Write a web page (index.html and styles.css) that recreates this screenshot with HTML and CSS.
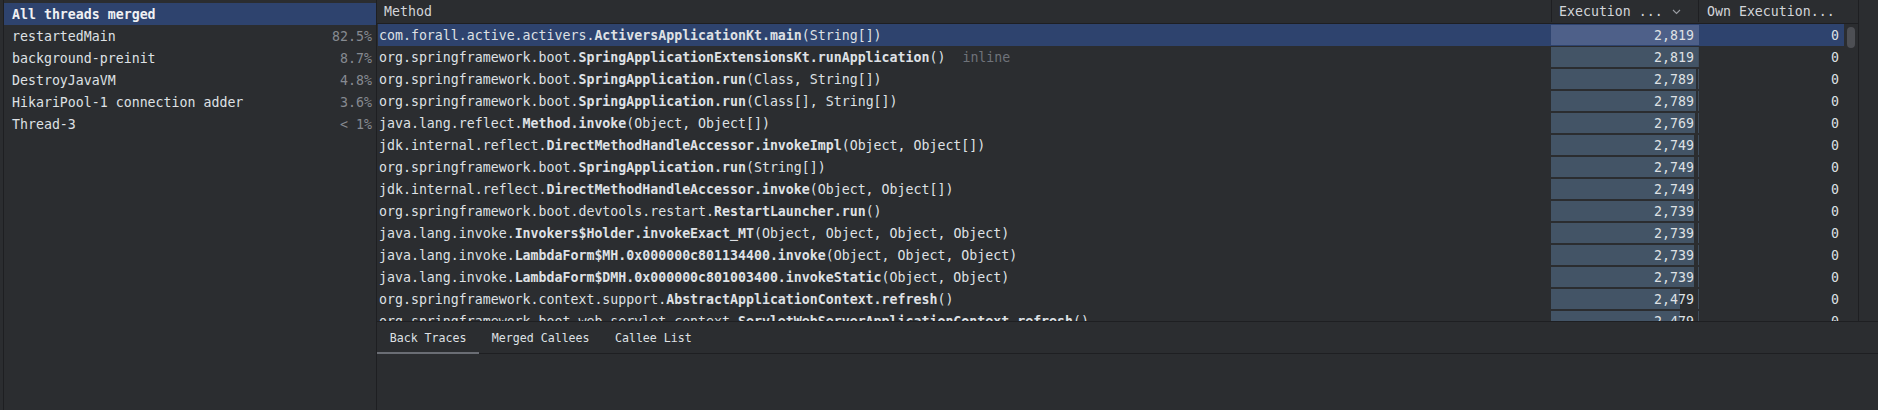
FILE: index.html
```html
<!DOCTYPE html>
<html>
<head>
<meta charset="utf-8">
<link rel="stylesheet" href="styles.css">
</head>
<body>
<div class="app">
  <div class="threads">
    <div class="thread sel"><span class="tname">All threads merged</span><span class="pct"></span></div>
    <div class="thread"><span class="tname">restartedMain</span><span class="pct">82.5%</span></div>
    <div class="thread"><span class="tname">background-preinit</span><span class="pct">8.7%</span></div>
    <div class="thread"><span class="tname">DestroyJavaVM</span><span class="pct">4.8%</span></div>
    <div class="thread"><span class="tname">HikariPool-1 connection adder</span><span class="pct">3.6%</span></div>
    <div class="thread"><span class="tname">Thread-3</span><span class="pct">&lt; 1%</span></div>
  </div>
  <div class="main">
    <div class="top">
      <div class="grid-area">
        <div class="header">
          <div class="hcell hmethod">Method</div>
          <div class="hcell hexec">Execution ...<svg class="chev" width="9" height="6" viewBox="0 0 9 6"><path d="M1 1 L4.5 4.5 L8 1" fill="none" stroke="#9a9da3" stroke-width="1.1"/></svg></div>
          <div class="hcell hown">Own Execution...</div>
          <div class="hcell hfill"></div>
        </div>
        <div class="body">
          <div class="rows">
            <div class="row sel"><div class="m">com.forall.active.activers.<b>ActiversApplicationKt.main</b>(String[])</div><div class="ex"><div class="track"><div class="bar" style="width:100%"></div></div><span class="num">2,819</span></div><div class="own">0</div></div>
            <div class="row"><div class="m">org.springframework.boot.<b>SpringApplicationExtensionsKt.runApplication</b>()<span class="inl">inline</span></div><div class="ex"><div class="track"><div class="bar" style="width:100%"></div></div><span class="num">2,819</span></div><div class="own">0</div></div>
            <div class="row"><div class="m">org.springframework.boot.<b>SpringApplication.run</b>(Class, String[])</div><div class="ex"><div class="track"><div class="bar" style="width:98.94%"></div></div><span class="num">2,789</span></div><div class="own">0</div></div>
            <div class="row"><div class="m">org.springframework.boot.<b>SpringApplication.run</b>(Class[], String[])</div><div class="ex"><div class="track"><div class="bar" style="width:98.94%"></div></div><span class="num">2,789</span></div><div class="own">0</div></div>
            <div class="row"><div class="m">java.lang.reflect.<b>Method.invoke</b>(Object, Object[])</div><div class="ex"><div class="track"><div class="bar" style="width:98.23%"></div></div><span class="num">2,769</span></div><div class="own">0</div></div>
            <div class="row"><div class="m">jdk.internal.reflect.<b>DirectMethodHandleAccessor.invokeImpl</b>(Object, Object[])</div><div class="ex"><div class="track"><div class="bar" style="width:97.52%"></div></div><span class="num">2,749</span></div><div class="own">0</div></div>
            <div class="row"><div class="m">org.springframework.boot.<b>SpringApplication.run</b>(String[])</div><div class="ex"><div class="track"><div class="bar" style="width:97.52%"></div></div><span class="num">2,749</span></div><div class="own">0</div></div>
            <div class="row"><div class="m">jdk.internal.reflect.<b>DirectMethodHandleAccessor.invoke</b>(Object, Object[])</div><div class="ex"><div class="track"><div class="bar" style="width:97.52%"></div></div><span class="num">2,749</span></div><div class="own">0</div></div>
            <div class="row"><div class="m">org.springframework.boot.devtools.restart.<b>RestartLauncher.run</b>()</div><div class="ex"><div class="track"><div class="bar" style="width:97.16%"></div></div><span class="num">2,739</span></div><div class="own">0</div></div>
            <div class="row"><div class="m">java.lang.invoke.<b>Invokers$Holder.invokeExact_MT</b>(Object, Object, Object, Object)</div><div class="ex"><div class="track"><div class="bar" style="width:97.16%"></div></div><span class="num">2,739</span></div><div class="own">0</div></div>
            <div class="row"><div class="m">java.lang.invoke.<b>LambdaForm$MH.0x000000c801134400.invoke</b>(Object, Object, Object)</div><div class="ex"><div class="track"><div class="bar" style="width:97.16%"></div></div><span class="num">2,739</span></div><div class="own">0</div></div>
            <div class="row"><div class="m">java.lang.invoke.<b>LambdaForm$DMH.0x000000c801003400.invokeStatic</b>(Object, Object)</div><div class="ex"><div class="track"><div class="bar" style="width:97.16%"></div></div><span class="num">2,739</span></div><div class="own">0</div></div>
            <div class="row"><div class="m">org.springframework.context.support.<b>AbstractApplicationContext.refresh</b>()</div><div class="ex"><div class="track"><div class="bar" style="width:87.94%"></div></div><span class="num">2,479</span></div><div class="own">0</div></div>
            <div class="row"><div class="m">org.springframework.boot.web.servlet.context.<b>ServletWebServerApplicationContext.refresh</b>()</div><div class="ex"><div class="track"><div class="bar" style="width:87.94%"></div></div><span class="num">2,479</span></div><div class="own">0</div></div>
          </div>
          <div class="scroll"><div class="thumb"></div></div>
        </div>
      </div>
      <div class="side"></div>
    </div>
    <div class="tabs">
      <div class="tab active">Back Traces</div>
      <div class="tab">Merged Callees</div>
      <div class="tab">Callee List</div>
    </div>
  </div>
</div>
</body>
</html>
```

FILE: styles.css
```css
html, body {
  margin: 0;
  padding: 0;
  background: #2b2d30;
}
body {
  width: 1878px;
  height: 410px;
  overflow: hidden;
  color: #dfe1e5;
  font-family: "DejaVu Sans Mono", "Liberation Mono", monospace;
  font-size: 13.25px;
}
.app {
  display: flex;
  height: 410px;
}
.threads {
  box-sizing: border-box;
  width: 374px;
  margin-left: 3px;
  border-left: 1px solid #1e1f22;
  border-right: 1px solid #1e1f22;
  padding-top: 3px;
  flex: none;
}
.thread {
  display: flex;
  justify-content: space-between;
  align-items: center;
  height: 22px;
  padding: 0 4px 0 8px;
  white-space: nowrap;
}
.thread.sel {
  background: #2e436e;
  color: #f0f1f3;
  font-weight: bold;
}
.pct {
  color: #868a91;
}
.main {
  flex: 1;
  display: flex;
  flex-direction: column;
  min-width: 0;
}
.top {
  display: flex;
  height: 321px;
  border-bottom: 1px solid #1e1f22;
  flex: none;
}
.grid-area {
  box-sizing: border-box;
  width: 1482px;
  border-right: 1px solid #1e1f22;
  display: flex;
  flex-direction: column;
  overflow: hidden;
}
.side {
  flex: 1;
}
.header {
  display: flex;
  height: 23px;
  border-bottom: 1px solid #1e1f22;
  flex: none;
}
.hcell {
  display: flex;
  align-items: center;
  height: 22px;
  color: #d3d5da;
  white-space: nowrap;
}
.hmethod {
  width: 1174px;
  padding-left: 7px;
  box-sizing: border-box;
}
.hexec {
  box-sizing: border-box;
  width: 147px;
  border-left: 1px solid #1e1f22;
  padding-left: 7px;
}
.chev {
  margin-left: 9px;
  margin-top: 1px;
}
.hown {
  box-sizing: border-box;
  width: 146px;
  border-left: 1px solid #1e1f22;
  padding-left: 8px;
}
.hfill {
  flex: 1;
}
.body {
  display: flex;
  flex: 1;
  overflow: hidden;
}
.rows {
  width: 1466px;
  margin-left: 1px;
  flex: none;
}
.row {
  display: flex;
  height: 22px;
  align-items: center;
  white-space: nowrap;
}
.row.sel {
  background: #2e436e;
}
.m {
  width: 1173px;
  box-sizing: border-box;
  padding-left: 1px;
  overflow: hidden;
  flex: none;
}
.m b {
  font-weight: bold;
}
.inl {
  color: #6f737a;
  margin-left: 17px;
}
.ex {
  position: relative;
  width: 148px;
  height: 22px;
  flex: none;
  display: flex;
  align-items: center;
  justify-content: flex-end;
}
.track {
  position: absolute;
  left: 0;
  top: 1px;
  width: 148px;
  height: 20px;
  box-sizing: border-box;
  border-right: 1px solid #3f4d5c;
}
.bar {
  height: 20px;
  background: #435466;
}
.row.sel .bar {
  background: #4e6089;
}
.row.sel .track {
  border-right-color: #4e6089;
}
.num {
  position: relative;
  padding-right: 5px;
  color: #dfe1e5;
}
.own {
  width: 145px;
  box-sizing: border-box;
  text-align: right;
  padding-right: 5px;
  flex: none;
}
.scroll {
  flex: 1;
  position: relative;
}
.thumb {
  position: absolute;
  left: 3px;
  top: 3px;
  width: 8px;
  height: 21px;
  border-radius: 4px;
  background: #4d4f54;
}
.tabs {
  display: flex;
  height: 31px;
  border-bottom: 1px solid #1e1f22;
  flex: none;
  font-size: 11.6px;
}
.tab {
  display: flex;
  align-items: center;
  padding: 0 12.7px;
  color: #dfe1e5;
  box-sizing: border-box;
  height: 32px;
  white-space: nowrap;
}
.tab.active {
  box-shadow: inset 0 -2px 0 #6a6d74;
}
```
